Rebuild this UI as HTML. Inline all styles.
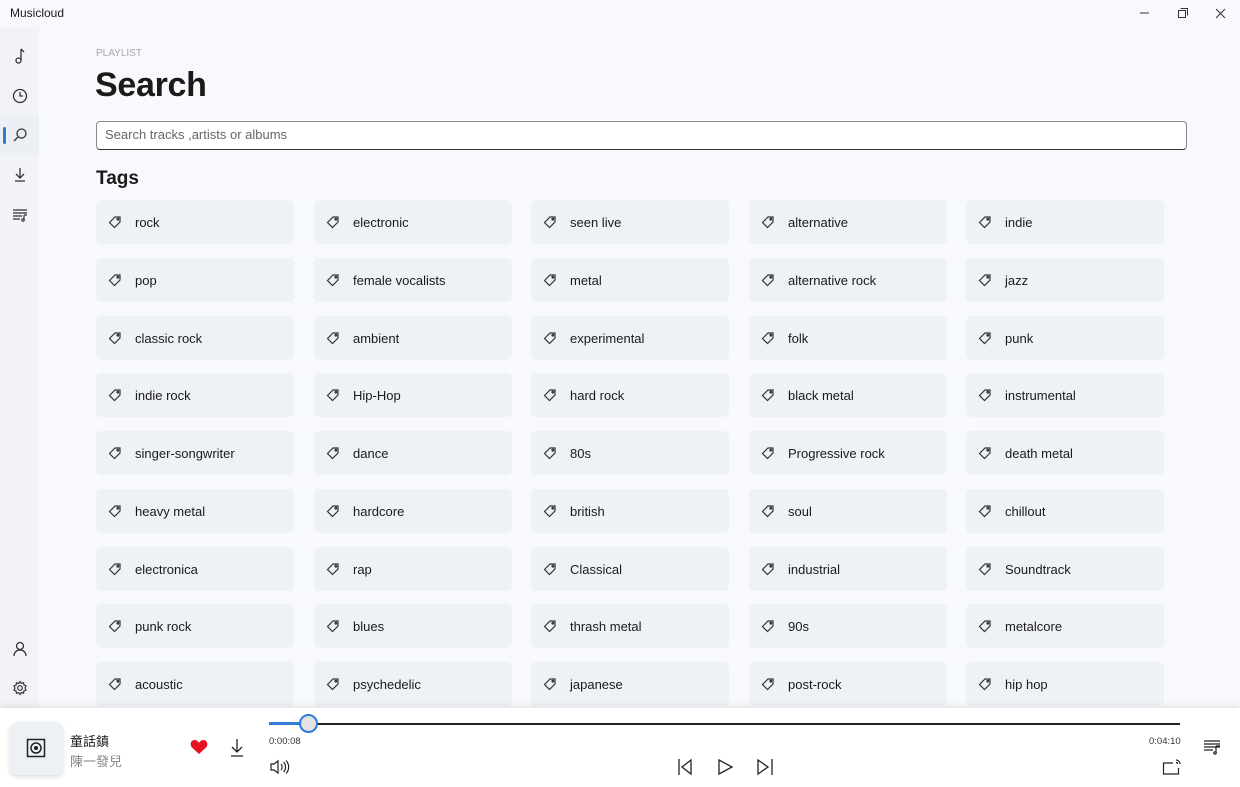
<!DOCTYPE html>
<html><head><meta charset="utf-8"><style>
*{margin:0;padding:0;box-sizing:border-box}
body{width:1240px;height:787px;overflow:hidden;background:#f7f9fc;font-family:"Liberation Sans","Noto Sans CJK TC",sans-serif;color:#1a1a1a;position:relative}
.title{position:absolute;left:10px;top:6px;font-size:12px}
.win{position:absolute;top:0;height:27px}
.side{position:absolute;left:0;top:27px;width:39px;height:681px;background:#f1f3f7}
.ic{position:absolute;left:10px;width:20px;height:20px}
.sel{position:absolute;left:3px;top:127px;width:3px;height:17px;background:#2f7bd6;border-radius:2px}
.selbg{position:absolute;left:0;top:116px;width:39px;height:38px;background:#eceff4}
.pl{position:absolute;left:96px;top:48px;font-size:10px;color:#a8a8a8}
h1{position:absolute;left:95px;top:66px;font-size:34px;font-weight:bold;letter-spacing:-0.3px}
.sb{position:absolute;left:96px;top:121px;width:1091px;height:29px;border:1px solid #8a8a8a;border-bottom:1.5px solid #333;border-radius:4px;background:#fff;font-size:13px;color:#666;padding:5px 8px}
h2{position:absolute;left:96px;top:168px;font-size:19px;font-weight:bold}
.t{position:absolute;width:198px;height:44px;background:#eef1f5;border-radius:5px;font-size:13px}
.t svg{position:absolute;left:12px;top:15px}
.t span{position:absolute;left:39px;top:15px}
.bar{position:absolute;left:0;top:708px;width:1240px;height:79px;background:#fff;box-shadow:0 -3px 5px rgba(0,0,0,.07)}
</style></head><body>
<div class="title">Musicloud</div>
<svg class="win" style="left:1130px" width="110" height="27"><path d="M10 13h9" stroke="#333" stroke-width="1"/><rect x="48.5" y="10.5" width="7" height="7" fill="none" stroke="#333"/><path d="M50.5 8.5h7v7" fill="none" stroke="#333"/><path d="M86 9l9 9M95 9l-9 9" stroke="#333"/></svg>
<div class="side"></div>
<div class="selbg"></div><div class="sel"></div>
<svg class="ic" style="top:46px" viewBox="0 0 20 20" fill="none" stroke="#333" stroke-width="1.3"><path d="M11 3v11"/><circle cx="8.5" cy="14.5" r="2.5"/><path d="M11 3l3 3"/></svg>
<svg class="ic" style="top:86px" viewBox="0 0 20 20" fill="none" stroke="#333" stroke-width="1.3"><circle cx="10" cy="10" r="6.5"/><path d="M10 6v4h3"/></svg>
<svg class="ic" style="top:125px" viewBox="0 0 20 20" fill="none" stroke="#333" stroke-width="1.3"><circle cx="11.5" cy="8.5" r="4.5"/><path d="M8.3 11.7L4 16"/></svg>
<svg class="ic" style="top:165px" viewBox="0 0 20 20" fill="none" stroke="#333" stroke-width="1.3"><path d="M10 3v10M6 9l4 4 4-4M5 16h10"/></svg>
<svg class="ic" style="top:205px" viewBox="0 0 20 20" fill="none" stroke="#333" stroke-width="1.2"><path d="M3 5h14M3 8h14M3 11h9M3 14h7M14 10v5"/><circle cx="13" cy="15" r="1.2"/><path d="M14 10h3"/></svg>
<svg class="ic" style="top:639px" viewBox="0 0 20 20" fill="none" stroke="#333" stroke-width="1.3"><circle cx="10" cy="7" r="3.5"/><path d="M4 17c0-4 3-6 6-6s6 2 6 6"/></svg>
<svg class="ic" style="top:678px" viewBox="0 0 20 20" fill="none" stroke="#333" stroke-width="1.2"><circle cx="10" cy="10" r="2.3"/><path d="M10 3.5l1.3 1.8 2.2-.6.4 2.2 2.1.9-.9 2.1.9 2.1-2.1.9-.4 2.2-2.2-.6L10 16.5l-1.3-1.8-2.2.6-.4-2.2-2.1-.9.9-2.1-.9-2.1 2.1-.9.4-2.2 2.2.6z"/></svg>
<div class="pl">PLAYLIST</div>
<h1>Search</h1>
<div class="sb">Search tracks ,artists or albums</div>
<h2>Tags</h2>
<div id="g"></div>
<script>
var tags=["rock","electronic","seen live","alternative","indie","pop","female vocalists","metal","alternative rock","jazz","classic rock","ambient","experimental","folk","punk","indie rock","Hip-Hop","hard rock","black metal","instrumental","singer-songwriter","dance","80s","Progressive rock","death metal","heavy metal","hardcore","british","soul","chillout","electronica","rap","Classical","industrial","Soundtrack","punk rock","blues","thrash metal","90s","metalcore","acoustic","psychedelic","japanese","post-rock","hip hop"];
var xs=[96,314,531,749,966],h="";
tags.forEach(function(t,i){var x=xs[i%5],y=200+Math.floor(i/5)*57.75;
h+='<div class="t" style="left:'+x+'px;top:'+y+'px"><svg width="14" height="14" viewBox="0 0 14 14" fill="none" stroke="#333" stroke-width="1.2"><path d="M1.5 7.5L7 2h5v5l-5.5 5.5z"/><circle cx="9.8" cy="4.2" r=".8"/></svg><span>'+t+'</span></div>';});
document.getElementById("g").innerHTML=h;
</script>
<div class="bar"></div>
<div style="position:absolute;left:10px;top:722px;width:53px;height:53px;background:#edf0f5;border-radius:8px;box-shadow:0 2px 5px rgba(0,0,0,.15)"></div>
<svg style="position:absolute;left:26px;top:738px" width="20" height="20" fill="none" stroke="#222" stroke-width="1.5"><rect x="1.5" y="1.5" width="17" height="17"/><circle cx="10" cy="10" r="5"/><circle cx="10" cy="10" r="1.3" fill="#222"/></svg>
<div style="position:absolute;left:70px;top:731px;font-size:13px">童話鎮</div>
<div style="position:absolute;left:70px;top:751px;font-size:13px;color:#888">陳一發兒</div>
<svg style="position:absolute;left:190px;top:739px" width="18" height="16" viewBox="0 0 18 16"><path d="M9 15L2 8.5C-.5 6 .5 1 4.5 1 6.7 1 8 2.5 9 3.8 10 2.5 11.3 1 13.5 1c4 0 5 5 2.5 7.5z" fill="#e81123"/></svg>
<svg style="position:absolute;left:229px;top:738px" width="16" height="20" fill="none" stroke="#222" stroke-width="1.3"><path d="M8 1v13M3 9l5 5 5-5M2 18h12"/></svg>
<div style="position:absolute;left:269px;top:723px;width:911px;height:1.5px;background:#222"></div>
<div style="position:absolute;left:269px;top:722px;width:40px;height:3px;background:#2f7bd6"></div>
<div style="position:absolute;left:299px;top:714px;width:19px;height:19px;border-radius:50%;background:#e3e3e3;border:2px solid #2f7bd6"></div>
<div style="position:absolute;left:269px;top:736px;font-size:9.5px;color:#333">0:00:08</div>
<div style="position:absolute;left:1149px;top:736px;font-size:9.5px;color:#333">0:04:10</div>
<svg style="position:absolute;left:270px;top:759px" width="20" height="16" fill="none" stroke="#222" stroke-width="1.2"><path d="M1 5h3l4-3v12l-4-3H1z"/><path d="M11 5c1.5 1.5 1.5 4.5 0 6M13.5 3c2.7 2.7 2.7 7.3 0 10M16 1.5c3.5 3.5 3.5 9.5 0 13"/></svg>
<svg style="position:absolute;left:676px;top:758px" width="100" height="18" fill="none" stroke="#222" stroke-width="1.3"><path d="M3 1v16M15 2L6 9l9 7z"/><path d="M43 2l13 7-13 7z"/><path d="M82 2l10 7-10 7zM96 1v16"/></svg>
<svg style="position:absolute;left:1162px;top:758px" width="20" height="18" fill="none" stroke="#222" stroke-width="1.2"><path d="M11 5H1.5v11h15V10"/><path d="M14 2c2 0 4 2 4 4M14 4.5c1 0 1.5.6 1.5 1.5"/></svg>
<svg style="position:absolute;left:1203px;top:739px" width="19" height="16" fill="none" stroke="#222" stroke-width="1.2"><path d="M1 2h16M1 5h16M1 8h16M1 11h9M13 7v7M13 7h4"/><circle cx="12" cy="14" r="1.2"/></svg>
</body></html>
